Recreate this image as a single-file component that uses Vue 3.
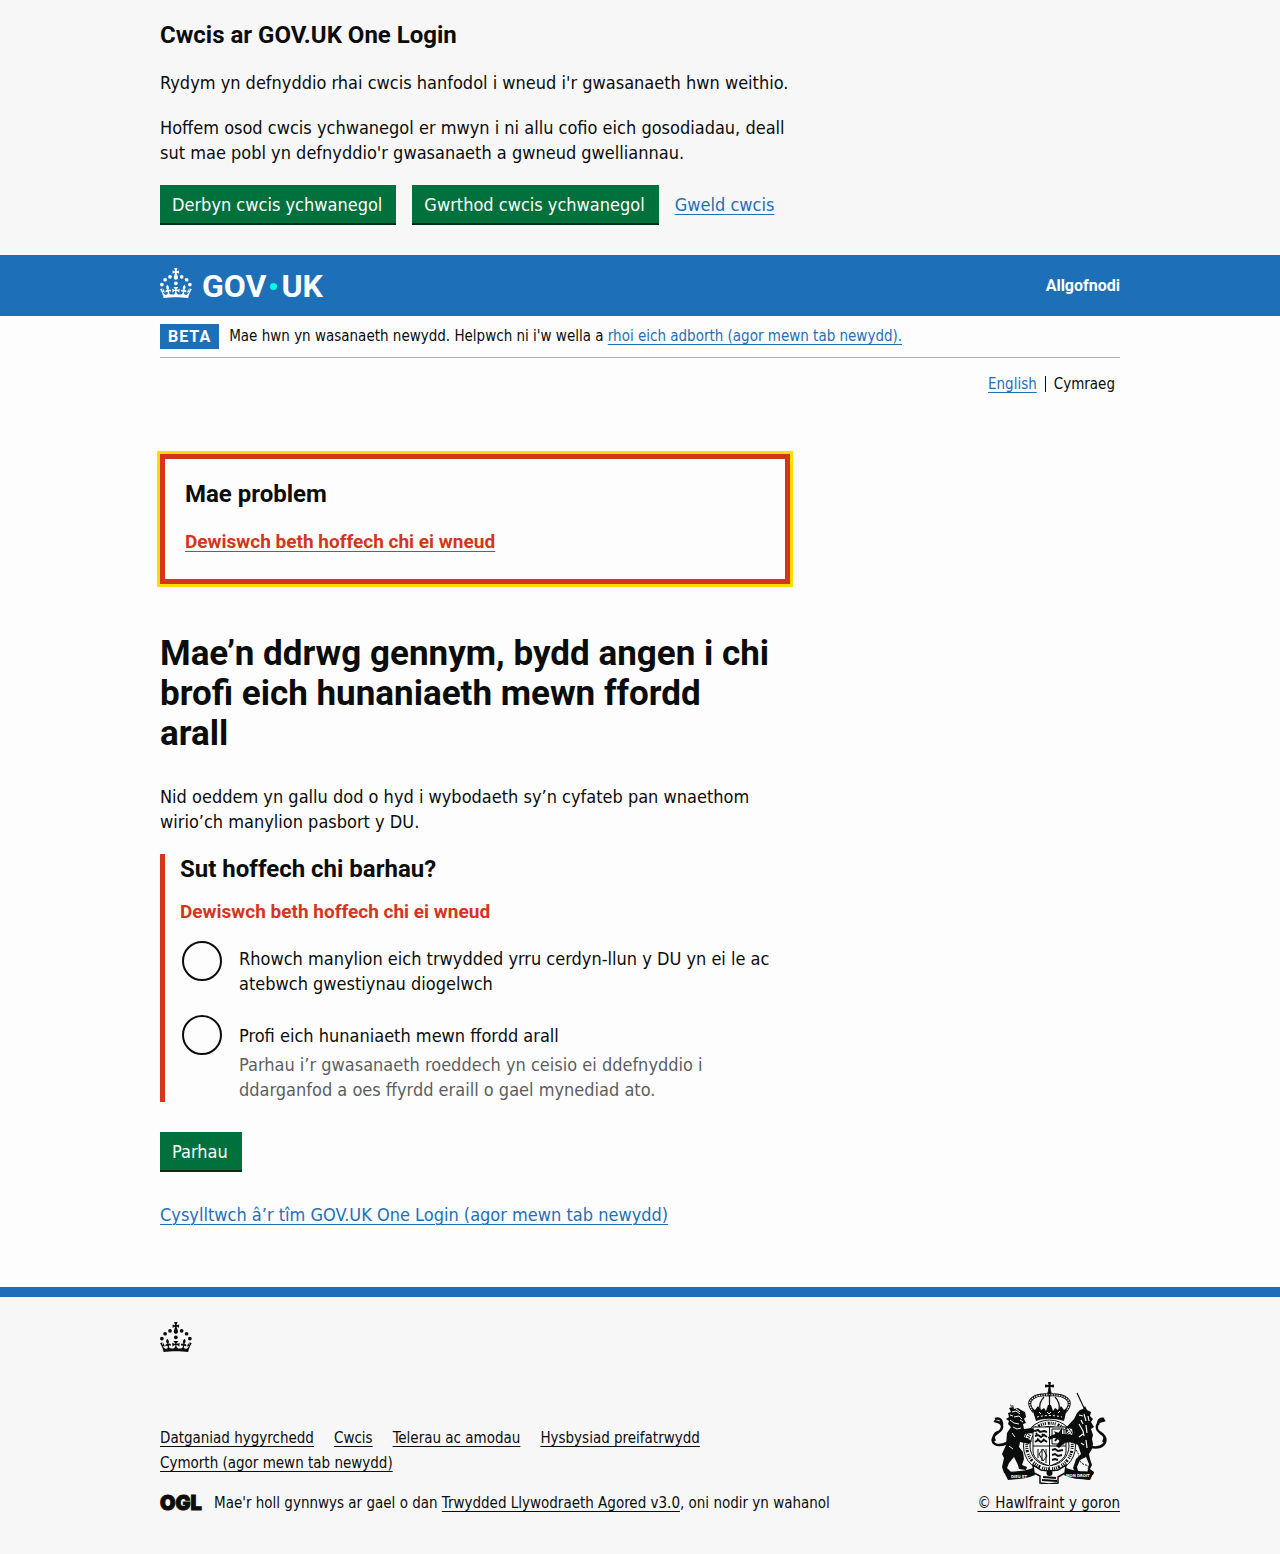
<script setup>
import { ref } from 'vue'

const choice = ref('')

const crownDots = [
  [20, 17.6], [10.2, 23.5], [3.7, 33.2], [31.7, 30.6],
  [43.3, 17.6], [53.2, 23.5], [59.7, 33.2],
]
const crownPath =
  'M33.1,9.8c.2-.1.3-.3.5-.5l4.6,2.4v-6.8l-4.6,1.5c-.1-.2-.3-.3-.5-.5l1.9-5.9h-6.7l1.9,5.9c-.2.1-.3.3-.5.5l-4.6-1.5v6.8l4.6-2.4c.1.2.3.3.5.5l-2.6,8c-.9,2.8,1.2,5.7,4.1,5.7h0c3,0,5.1-2.9,4.1-5.7l-2.6-8ZM37,37.9s-3.4,3.8-4.1,6.1c2.2,0,4.2-.5,6.4-2.8l-.7,8.5c-2-2.8-4.4-4.1-5.7-3.8.1,3.1.5,6.7,5.8,7.2,3.7.3,6.7-1.5,7-3.8.4-2.6-2-4.3-3.7-1.6-1.4-4.5,2.4-6.1,4.9-3.2-1.9-4.5-1.8-7.7,2.4-10.9,3,4,2.6,7.3-1.2,11.1,2.4-1.3,6.2,0,4,4.6-1.2-2.8-3.7-2.2-4.2.2-.3,1.7.7,3.7,3,4.2,1.9.3,4.7-.9,7-5.9-1.3,0-2.4.7-3.9,1.7l2.4-8c.6,2.3,1.4,3.7,2.2,4.5.6-1.6.5-2.8,0-5.3l5,1.8c-2.6,3.6-5.2,8.7-7.3,17.5-7.4-1.1-15.7-1.7-24.5-1.7h0c-8.8,0-17.1.6-24.5,1.7-2.1-8.9-4.7-13.9-7.3-17.5l5-1.8c-.5,2.5-.6,3.7,0,5.3.8-.8,1.6-2.3,2.2-4.5l2.4,8c-1.5-1-2.6-1.7-3.9-1.7,2.3,5,5.2,6.2,7,5.9,2.3-.4,3.3-2.4,3-4.2-.5-2.4-3-3.1-4.2-.2-2.2-4.6,1.6-6,4-4.6-3.7-3.7-4.2-7.1-1.2-11.1,4.2,3.2,4.3,6.4,2.4,10.9,2.5-2.8,6.3-1.3,4.9,3.2-1.8-2.7-4.1-1-3.7,1.6.3,2.3,3.3,4.1,7,3.8,5.4-.5,5.7-4.2,5.8-7.2-1.3-.2-3.7,1-5.7,3.8l-.7-8.5c2.2,2.3,4.2,2.7,6.4,2.8-.7-2.3-4.1-6.1-4.1-6.1h10.6,0Z'

const footerLinks = [
  'Datganiad hygyrchedd',
  'Cwcis',
  'Telerau ac amodau',
  'Hysbysiad preifatrwydd',
  'Cymorth (agor mewn tab newydd)',
]
</script>

<template>
  <div class="page">
    <section class="cookies" aria-label="Cwcis ar GOV.UK One Login">
      <div class="container">
        <div class="two-thirds">
          <h2 class="heading-m">Cwcis ar GOV.UK One Login</h2>
          <p>Rydym yn defnyddio rhai cwcis hanfodol i wneud i'r gwasanaeth hwn weithio.</p>
          <p>Hoffem osod cwcis ychwanegol er mwyn i ni allu cofio eich gosodiadau, deall sut mae pobl yn defnyddio'r gwasanaeth a gwneud gwelliannau.</p>
          <div class="button-group">
            <button type="button" class="button">Derbyn cwcis ychwanegol</button>
            <button type="button" class="button">Gwrthod cwcis ychwanegol</button>
            <a href="#" class="link">Gweld cwcis</a>
          </div>
        </div>
      </div>
    </section>

    <header class="header">
      <div class="container header-row">
        <a href="#" class="logo" aria-label="GOV.UK">
          <svg class="crown" viewBox="0 0 64 60" aria-hidden="true">
            <circle v-for="(dot, i) in crownDots" :key="i" :cx="dot[0]" :cy="dot[1]" r="3.7" />
            <path :d="crownPath" />
          </svg>
          <span class="wordmark">GOV<span class="wordmark-dot"></span>UK</span>
        </a>
        <a href="#" class="sign-out">Allgofnodi</a>
      </div>
    </header>

    <div class="container">
      <div class="phase">
        <strong class="tag">BETA</strong>
        <span>Mae hwn yn wasanaeth newydd. Helpwch ni i'w wella a <a href="#" class="link">rhoi eich adborth (agor mewn tab newydd).</a></span>
      </div>

      <nav class="languages" aria-label="Iaith">
        <a href="#" class="link">English</a>
        <span class="current">Cymraeg</span>
      </nav>

      <main class="main two-thirds">
        <div class="error-summary" role="alert">
          <h2 class="heading-m">Mae problem</h2>
          <a href="#choice-licence" class="error-link">Dewiswch beth hoffech chi ei wneud</a>
        </div>

        <h1>Mae’n ddrwg gennym, bydd angen i chi brofi eich hunaniaeth mewn ffordd arall</h1>
        <p>Nid oeddem yn gallu dod o hyd i wybodaeth sy’n cyfateb pan wnaethom wirio’ch manylion pasbort y DU.</p>

        <form @submit.prevent>
          <div class="group">
            <fieldset aria-describedby="choice-error">
              <legend class="heading-m">Sut hoffech chi barhau?</legend>
              <p id="choice-error" class="error-message">Dewiswch beth hoffech chi ei wneud</p>
              <div class="radio">
                <input id="choice-licence" v-model="choice" type="radio" name="choice" value="licence" />
                <label for="choice-licence">Rhowch manylion eich trwydded yrru cerdyn-llun y DU yn ei le ac atebwch gwestiynau diogelwch</label>
              </div>
              <div class="radio">
                <input id="choice-other" v-model="choice" type="radio" name="choice" value="other" aria-describedby="other-hint" />
                <div>
                  <label for="choice-other">Profi eich hunaniaeth mewn ffordd arall</label>
                  <div id="other-hint" class="hint">Parhau i’r gwasanaeth roeddech yn ceisio ei ddefnyddio i ddarganfod a oes ffyrdd eraill o gael mynediad ato.</div>
                </div>
              </div>
            </fieldset>
          </div>
          <button type="submit" class="button">Parhau</button>
        </form>

        <div class="contact"><a href="#" class="link">Cysylltwch â’r tîm GOV.UK One Login (agor mewn tab newydd)</a></div>
      </main>
    </div>

    <footer class="footer">
      <div class="container">
        <svg class="crown footer-crown" viewBox="0 0 64 60" aria-hidden="true">
          <circle v-for="(dot, i) in crownDots" :key="i" :cx="dot[0]" :cy="dot[1]" r="3.7" />
          <path :d="crownPath" />
        </svg>
        <div class="footer-row">
          <div class="footer-main">
            <ul class="footer-links">
              <li v-for="label in footerLinks" :key="label"><a href="#">{{ label }}</a></li>
            </ul>
            <div class="licence">
              <span class="ogl">OGL</span>
              <span>Mae'r holl gynnwys ar gael o dan <a href="#">Trwydded Llywodraeth Agored v3.0</a>, oni nodir yn wahanol</span>
            </div>
          </div>
          <div class="copyright">
            <svg class="arms" viewBox="0 0 116 102" aria-hidden="true">
              <!-- crown -->
              <path d="M57 0h3l-.5 3 3.500-.5v3l-3.500-.5.5 4h-3l.5-4-3.500.5v-3l3.500.5z" />
              <circle cx="58.500" cy="11" r="2.200" />
              <g fill="none" stroke="currentColor">
                <path d="M43 30C32 18 44 12 58 13C73 12 85 18 74 30" stroke-width="3" />
                <path d="M43 30C32 18 44 12 58 13C73 12 85 18 74 30" stroke="#f7f7f8" stroke-width="1.200" stroke-dasharray="1.500 1" />
                <path d="M58.500 13v15M53 15c-4 4-5 8-4 13M64 15c4 4 5 8 4 13" stroke-width="1.200" />
              </g>
              <path d="M41 26l3 2 3-4 3 4 3-2 2 3 2-6h3l2 6 2-3 3 2 3-4 3 4 3-2-3 13c-10-3-20-3-28 0z" />
              <path d="M46 35c8-2 17-2 25 0" fill="none" stroke="#f7f7f8" stroke-width="1" stroke-dasharray="2 2" />
              <path d="M48 30l2 2M56 30l2 2 2-2M67 31l2-2" fill="none" stroke="#f7f7f8" stroke-width="1" />
              <!-- garter -->
              <circle cx="58.500" cy="64" r="26" fill="none" stroke="currentColor" stroke-width="1" />
              <circle cx="58.500" cy="64" r="22.800" fill="none" stroke="currentColor" stroke-width="3" stroke-dasharray="1 1 1 2 2 1 1 1" />
              <circle cx="58.500" cy="64" r="19.500" fill="none" stroke="currentColor" stroke-width="1" />
              <!-- shield -->
              <path d="M42 45h33v24c0 8-8 12-16.500 15C50 81 42 77 42 69z" fill="#f7f7f8" stroke="currentColor" />
              <path d="M58.500 45v38M42 64h33" stroke="currentColor" stroke-width="1" />
              <g fill="none" stroke="currentColor" stroke-width="2">
                <path d="M44 49l3-1 2 2 4-1 3 1M44 54l3-1 3 2 3-2 3 2M44 60l3-2 3 2 3-2 3 2M45 51l1 1M51 52l1 1M46 57l2 1M52 57l1 1" />
                <path d="M61 47h12v15h-12z" stroke-width="1" />
                <path d="M64 59l3-4-2-4 3 1 2-3v5l2 3M66 55l4 4" />
                <path d="M47 67v9M51 67v12M55 67v14M48 72l4-5 4 7-4 5z" stroke-width="1" />
                <path d="M61 68l3-1 3 2 5-1M61 73l3-1 3 2 4-1M61 78l3-1 3 1" />
              </g>
              <!-- lion -->
              <path d="M19 22l1 3 2-2 1 4 4-1 3 2 4 2 1 5-2 2 2 4-3 1 1 5 8-1 4 3-4 2-7 1-1 3 8 4-3 3-9-2-1 5 4 5 1 7-2 6 5 2-1 3-7-1-1-4-4-8-5 6-2 5 4 4-1 2-6-1-2-6 2-9-2-4 4-9 1-12 4-6-3-3 1-3-3-2 3-2-1-4 3-1-2-4 4-1z" />
              <path d="M21 30l4-1 4 3M23 35l5-1 3 3M19 38l4 3 5 1M22 45l4 2 4-1M21 51l3 4M18 64l4 3M25 27l4 3M29 38l3 2M19 33l3 1" fill="none" stroke="#f7f7f8" stroke-width="1" />
              <path d="M16 61C5 66-1 61 3 54C7 49 12 49 11 44C10 39 5 40 3 39M11 43C11 36 7 36 4 37M4 59C1 55 4 51 7 50" fill="none" stroke="currentColor" stroke-width="2.500" />
              <!-- unicorn -->
              <path d="M86 11l8 17" stroke="currentColor" stroke-width="1.200" />
              <path d="M83 37l3-6 3-3 3-1 2-3 2 4 4 2-1 4 3 3-2 3 3 5-3 2 2 6-1 4 1 5-1 5-3 5 1 5 2 6-2 4 4 3-1 3-6-1 2-10-3-7-6 3-3 7 1 4-3 1-2-4 3-9 5-5-3-9-7-3-7 1-5 5-3-2 5-7-7-1-5 2-1-3 7-3 10 0 8 1-1-6-4-1-5 3z" />
              <path d="M88 33l4 1M93 32l2 7M88 42l4 7 1 5M95 43l1 8M95 58l1 8M88 55l4-3M90 61l3 2M97 34l1 5M90 38l2 4" fill="none" stroke="#f7f7f8" stroke-width="1.200" />
              <path d="M100 65C112 67 117 60 113 54C110 50 105 50 106 44C107 38 111 40 114 38M107 43C107 37 110 36 113 37M112 60C115 56 113 52 109 51" fill="none" stroke="currentColor" stroke-width="2.500" />
              <path d="M85 68c5 6 2 12 7 14s6 1 5 5" fill="none" stroke="currentColor" stroke-dasharray="2 1" />
              <!-- scroll -->
              <path d="M13 90c10-1 18 0 29-4l2 7c-8 4-17 4-27 5z" />
              <path d="M75 86c11 4 19 3 28 4l-4 8c-10-1-19-1-26-5z" />
              <path d="M42 83l8 5 8 1 9-1 8-5-1 8-7 4v6l-9 1-9-1v-7l-6-3z" fill="#f7f7f8" stroke="currentColor" stroke-width="1.500" />
              <path d="M52 95l13 1M51 98l15 1" stroke="currentColor" stroke-width="2" />
              <circle cx="58.500" cy="91" r="3" />
              <text x="20" y="96" class="motto">DIEU ET</text>
              <text x="75" y="95" class="motto">MON DROIT</text>
            </svg>
            <a href="#">© Hawlfraint y goron</a>
          </div>
        </div>
      </div>
    </footer>
  </div>
</template>

<style>
body {
  background: #f7f7f8;
}
</style>

<style scoped>
.page {
  background: #fdfdfd;
  color: #0b0c0c;
  font-family: "DejaVu Sans Condensed", "Liberation Sans", sans-serif;
  font-size: 18px;
  line-height: 25px;
}
.container {
  max-width: 960px;
  margin: 0 auto;
}
.two-thirds {
  max-width: 630px;
}
p {
  margin: 0 0 20px;
}
.heading-m,
h1,
.error-link,
.error-message,
.sign-out,
.tag,
.wordmark {
  font-family: Roboto, "Liberation Sans", sans-serif;
  font-weight: 700;
}
.heading-m {
  margin: 0 0 20px;
  padding: 0;
  font-size: 24px;
  line-height: 30px;
}
.link {
  color: #1d70b8;
  text-decoration: underline;
  text-decoration-thickness: 1px;
  text-underline-offset: 3px;
}
.button {
  display: block;
  margin: 0;
  padding: 7px 14px 6px 12px;
  border: 0;
  box-shadow: 0 2px 0 #002d18;
  background: #00703c;
  color: #fff;
  font: inherit;
  white-space: nowrap;
  cursor: pointer;
}

.cookies {
  padding: 20px 0 32px;
  background: #f7f7f8;
}
.button-group {
  display: flex;
  align-items: center;
  gap: 16px;
  white-space: nowrap;
}

.header {
  background: #1d70b8;
  color: #fff;
}
.header-row {
  display: flex;
  align-items: center;
  justify-content: space-between;
  height: 61px;
}
.header a {
  color: inherit;
  text-decoration: none;
}
.logo {
  display: flex;
  align-items: flex-start;
  gap: 10px;
  margin-bottom: 2px;
}
.crown {
  display: block;
  width: 32px;
  height: 30px;
  fill: currentColor;
}
.wordmark {
  display: flex;
  align-items: center;
  margin-top: 3px;
  font-size: 32px;
  line-height: 30px;
}
.wordmark-dot {
  width: 7px;
  height: 7px;
  margin: 0 4px;
  border-radius: 50%;
  background: #00ffe0;
}
.sign-out {
  font-size: 16px;
  line-height: 20px;
}

.phase {
  display: flex;
  align-items: center;
  gap: 10px;
  padding: 8px 0;
  border-bottom: 1px solid #b1b4b6;
  font-size: 15px;
}
.tag {
  padding: 0 8px;
  background: #1d70b8;
  color: #fff;
  font-size: 16px;
  letter-spacing: 1px;
}
.languages {
  display: flex;
  justify-content: flex-end;
  align-items: baseline;
  padding: 14px 5px 0 0;
  font-size: 15px;
}
.current {
  margin-left: 8px;
  padding-left: 8px;
  border-left: 1px solid #0b0c0c;
  line-height: 16px;
}

.main {
  padding: 57px 0 60px;
}
.error-summary {
  margin-bottom: 50px;
  padding: 20px 20px 25px;
  border: 5px solid #d4351c;
  outline: 3px solid #ffdd00;
}
.error-link,
.error-message {
  color: #d4351c;
  font-size: 19px;
}
.error-link {
  text-decoration-thickness: 1px;
  text-underline-offset: 3px;
}
h1 {
  margin: 0 0 30px;
  padding-right: 15px;
  font-size: 35px;
  line-height: 40px;
}
.group {
  margin-bottom: 30px;
  padding-left: 15px;
  border-left: 5px solid #d4351c;
}
fieldset {
  min-width: 0;
  margin: 0;
  padding: 0;
  border: 0;
}
.group .heading-m {
  margin-bottom: 15px;
}
.error-message {
  margin-bottom: 15px;
}
.radio {
  display: flex;
  align-items: flex-start;
  gap: 17px;
  padding-left: 2px;
}
.radio + .radio {
  margin-top: 10px;
}
.radio input {
  appearance: none;
  flex: none;
  width: 40px;
  height: 40px;
  margin: 2px 0 0;
  border: 2px solid #0b0c0c;
  border-radius: 50%;
}
.radio input:checked {
  background: radial-gradient(#0b0c0c 50%, transparent 54%);
}
.radio label {
  display: block;
  padding: 7px 15px 7px 0;
}
.radio div > label {
  padding: 10px 0 4px;
}
.hint {
  padding-right: 40px;
  color: #5c5e60;
}
.contact {
  margin-top: 32px;
}

.footer {
  padding: 25px 0 38px;
  border-top: 10px solid #1d70b8;
  background: #f7f7f8;
  font-size: 15px;
}
.footer-crown {
  margin-bottom: 30px;
}
.footer a {
  color: inherit;
  text-decoration-thickness: 1px;
  text-underline-offset: 3px;
}
.footer-row {
  display: flex;
  align-items: flex-end;
  justify-content: space-between;
}
.footer-links {
  display: flex;
  flex-wrap: wrap;
  column-gap: 20px;
  max-width: 670px;
  margin: 0 0 15px;
  padding: 0;
  list-style: none;
}
.licence {
  display: flex;
  align-items: center;
  gap: 13px;
}
.ogl {
  width: 41px;
  font-family: Inter, sans-serif;
  font-size: 20px;
  font-weight: 900;
  -webkit-text-stroke: 1px currentColor;
}
.copyright {
  display: flex;
  flex-direction: column;
  align-items: center;
  gap: 7px;
}
.arms {
  width: 116px;
  height: 102px;
  fill: currentColor;
}
.motto {
  fill: #f7f7f8;
  font-size: 4px;
  font-weight: 700;
}
</style>
